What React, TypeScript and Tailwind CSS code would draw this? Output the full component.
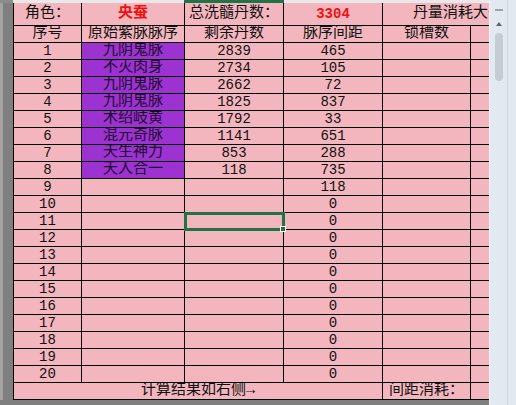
import React from 'react';

type Row = { n: number; vein?: string; left?: string; gap?: string };

const rows: Row[] = [
  { n: 1, vein: '九阴鬼脉', left: '2839', gap: '465' },
  { n: 2, vein: '不灭肉身', left: '2734', gap: '105' },
  { n: 3, vein: '九阴鬼脉', left: '2662', gap: '72' },
  { n: 4, vein: '九阴鬼脉', left: '1825', gap: '837' },
  { n: 5, vein: '术绍岐黄', left: '1792', gap: '33' },
  { n: 6, vein: '混元奇脉', left: '1141', gap: '651' },
  { n: 7, vein: '天生神力', left: '853', gap: '288' },
  { n: 8, vein: '天人合一', left: '118', gap: '735' },
  { n: 9, gap: '118' },
  ...Array.from({ length: 11 }, (_, i) => ({ n: 10 + i, gap: '0' })),
];

const base = 'border-r border-b border-black flex items-center justify-center whitespace-nowrap';
const cell = `${base} overflow-hidden`;

export default function App() {
  return (
    <div className="w-[516px] h-[405px] flex bg-[#7f7f7f] overflow-hidden font-['Liberation_Mono','Noto_Sans_CJK_SC',sans-serif] text-[15px] text-[#111]">
      {/* Sheet */}
      <div className="w-[489px] flex flex-col">
        {/* column header edge */}
        <div className="h-[3px] flex shrink-0">
          <div className="w-[13px] bg-[#8c8c8c]" />
          <div className="w-[171px] bg-[#e9e9e9]" />
          <div className="w-[100px] bg-[#217346]" />
          <div className="flex-1 bg-[#e9e9e9]" />
        </div>

        <div className="flex">
          <div className="w-[13px] shrink-0 border-l-[3px] border-[#a3a3a3] bg-[#7f7f7f]" />
          <div className="grid grid-cols-[68px_103px_99px_99px_88px_40px] border-l border-black bg-[#f4b6be] overflow-hidden w-[476px] shrink-0">
            {/* title row */}
            <div className={`${cell} h-[23px]`}>角色：</div>
            <div className={`${cell} h-[23px] text-[#f01010] font-bold`}>央蚕</div>
            <div className={`${cell} h-[23px]`}>总洗髓丹数：</div>
            <div className={`${cell} h-[23px] text-[#f01010] font-bold text-[14px]`}>3304</div>
            <div className={`${cell} col-span-2 h-[23px] !justify-start pl-[30px]`}>丹量消耗大于</div>

            {/* head row */}
            <div className={`${cell} h-[17px]`}>序号</div>
            <div className={`${cell} h-[17px]`}>原始紫脉脉序</div>
            <div className={`${cell} h-[17px]`}>剩余丹数</div>
            <div className={`${cell} h-[17px]`}>脉序间距</div>
            <div className={`${cell} h-[17px]`}>锁槽数</div>
            <div className={`${cell} h-[17px]`} />

            {rows.map((r) => (
              <React.Fragment key={r.n}>
                <div className={`${cell} h-[17px] text-[14px]`}>{r.n}</div>
                <div className={`${cell} h-[17px] ${r.vein ? 'bg-[#9c32d0] text-[#1c0830]' : ''}`}>{r.vein}</div>
                {r.n === 11 ? (
                  <div className={`${base} h-[17px] relative`}>
                    <div className="absolute z-10 -left-[1px] -top-[1px] w-[101px] h-[19px] border-[3px] border-[#217346]" />
                    <div className="absolute z-20 -right-[3px] -bottom-[3px] w-[6px] h-[6px] bg-[#217346] border border-white" />
                  </div>
                ) : (
                  <div className={`${cell} h-[17px] text-[14px]`}>{r.left}</div>
                )}
                <div className={`${cell} h-[17px] text-[14px]`}>{r.gap}</div>
                <div className={`${cell} h-[17px]`} />
                <div className={`${cell} h-[17px]`} />
              </React.Fragment>
            ))}

            {/* footer row */}
            <div className={`${cell} col-span-4 h-[17px]`}>计算结果如右侧→</div>
            <div className={`${cell} h-[17px]`}>间距消耗：</div>
            <div className={`${cell} h-[17px]`} />
          </div>
        </div>
      </div>

      {/* Vertical scrollbar */}
      <div className="w-[27px] h-full flex bg-[#e2e9f0] border-l border-[#f2f5f8]">
        <div className="w-[17px] flex flex-col items-center">
          <div className="mt-[9px] w-[8px] h-[2px] bg-[#9aa3ad]" />
          <svg width="8" height="6" viewBox="0 0 8 6" className="mt-[10px]">
            <path d="M4 1 L7 5 L1 5 Z" fill="#5b6470" />
          </svg>
          <div className="mt-[6px] w-[8px] h-[48px] rounded-full bg-[#c6ccd3]" />
        </div>
        <div className="w-px h-full bg-[#cdd5de]" />
      </div>
    </div>
  );
}
